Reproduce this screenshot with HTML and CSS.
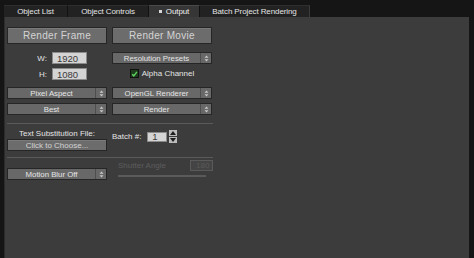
FILE: index.html
```html
<!DOCTYPE html>
<html>
<head>
<meta charset="utf-8">
<link rel="stylesheet" href="styles.css">
</head>
<body>
<div class="app">
  <div class="tabs">
    <div class="tab t-list">Object List</div>
    <div class="tab t-ctrl">Object Controls</div>
    <div class="tab t-out active"><span class="dot"></span>Output</div>
    <div class="tab t-batch">Batch Project Rendering</div>
  </div>
  <div class="panel">
    <div class="content">
      <div class="row r1">
        <div class="btn big">Render Frame</div>
        <div class="btn big">Render Movie</div>
      </div>
      <div class="row r2">
        <div class="col dims">
          <div class="field"><span class="lbl">W:</span><span class="input">1920</span></div>
          <div class="field"><span class="lbl">H:</span><span class="input">1080</span></div>
        </div>
        <div class="col">
          <div class="dd"><span class="dd-text">Resolution Presets</span><span class="dd-arrow"><svg width="5" height="7" viewBox="0 0 5 7"><path d="M2.5 0.5L4.5 2.8H0.5Z M2.5 6.5L4.5 4.2H0.5Z" fill="#c8c8c8"/></svg></span></div>
          <div class="check-row">
            <span class="checkbox"><svg width="8" height="8" viewBox="0 0 8 8"><path d="M1.4 4.2L3.2 6.1L6.8 1.6" fill="none" stroke="#5fd35f" stroke-width="1.6"/></svg></span>
            <span class="check-lbl">Alpha Channel</span>
          </div>
        </div>
      </div>
      <div class="row r3">
        <div class="dd"><span class="dd-text">Pixel Aspect</span><span class="dd-arrow"><svg width="5" height="7" viewBox="0 0 5 7"><path d="M2.5 0.5L4.5 2.8H0.5Z M2.5 6.5L4.5 4.2H0.5Z" fill="#c8c8c8"/></svg></span></div>
        <div class="dd"><span class="dd-text">OpenGL Renderer</span><span class="dd-arrow"><svg width="5" height="7" viewBox="0 0 5 7"><path d="M2.5 0.5L4.5 2.8H0.5Z M2.5 6.5L4.5 4.2H0.5Z" fill="#c8c8c8"/></svg></span></div>
      </div>
      <div class="row r4">
        <div class="dd"><span class="dd-text">Best</span><span class="dd-arrow"><svg width="5" height="7" viewBox="0 0 5 7"><path d="M2.5 0.5L4.5 2.8H0.5Z M2.5 6.5L4.5 4.2H0.5Z" fill="#c8c8c8"/></svg></span></div>
        <div class="dd"><span class="dd-text">Render</span><span class="dd-arrow"><svg width="5" height="7" viewBox="0 0 5 7"><path d="M2.5 0.5L4.5 2.8H0.5Z M2.5 6.5L4.5 4.2H0.5Z" fill="#c8c8c8"/></svg></span></div>
      </div>
      <div class="sep s1"></div>
      <div class="row r5">
        <div class="col">
          <div class="text-lbl">Text Substitution File:</div>
          <div class="btn small">Click to Choose...</div>
        </div>
        <div class="col batch">
          <span class="lbl batch-lbl">Batch #:</span>
          <span class="input batch-input">1</span>
          <span class="spinner">
            <span class="spin"><svg width="8" height="6" viewBox="0 0 8 6"><path d="M4 1L7 5H1Z" fill="#1e1e1e"/></svg></span>
            <span class="spin"><svg width="8" height="6" viewBox="0 0 8 6"><path d="M4 5L7 1H1Z" fill="#1e1e1e"/></svg></span>
          </span>
        </div>
      </div>
      <div class="sep s2"></div>
      <div class="row r6">
        <div class="col">
          <div class="dd blur"><span class="dd-text">Motion Blur Off</span><span class="dd-arrow"><svg width="5" height="7" viewBox="0 0 5 7"><path d="M2.5 0.5L4.5 2.8H0.5Z M2.5 6.5L4.5 4.2H0.5Z" fill="#c8c8c8"/></svg></span></div>
        </div>
        <div class="col shutter">
          <div class="shutter-row">
            <span class="shutter-lbl">Shutter Angle</span>
            <span class="shutter-input">180</span>
          </div>
          <div class="slider"></div>
        </div>
      </div>
    </div>
  </div>
</div>
</body>
</html>
```
FILE: styles.css
```css
* { box-sizing: border-box; }
html, body { margin: 0; padding: 0; }
body {
  background: #151515;
  width: 474px;
  height: 258px;
  overflow: hidden;
  font-family: "Liberation Sans", Arial, sans-serif;
  color: #e2e2e2;
}
.app { display: flex; flex-direction: column; height: 258px; padding-top: 5px; }
.tabs { display: flex; padding-left: 4px; height: 12px; }
.tab {
  height: 12px;
  background: #222;
  border-right: 1px solid #111;
  border-top: 1px solid #2e2e2e;
  font-size: 8px;
  font-weight: bold;
  color: #e4e4e4;
  display: flex;
  align-items: center;
  justify-content: center;
  letter-spacing: -0.1px;
}
.t-list { width: 64px; }
.t-ctrl { width: 81px; }
.t-out { width: 51px; }
.t-batch { width: 110px; border-right: 1px solid #3a3a3a; }
.tab.active { background: #363636; border-top: 1px solid #4a4a4a; color: #f0f0f0; font-weight: normal; }
.dot { width: 3px; height: 3px; background: #d8d8d8; margin-right: 4px; }
.t-out, .t-batch { font-weight: normal; }
.t-list, .t-ctrl { font-weight: normal; }
.panel {
  flex: 1;
  margin: 0 5px 0 4px;
  background: #3c3c3c;
  border-left: 1px solid #2c2c2c;
  padding: 10px 0 0 2px;
}
.content { width: 206px; display: flex; flex-direction: column; }
.row { display: flex; gap: 5px; }
.col { width: 100px; display: flex; flex-direction: column; }
.btn {
  width: 100px;
  background: #6c6c6c;
  border: 1px solid #262626;
  box-shadow: inset 0 1px 0 #7a7a7a;
  display: flex;
  align-items: center;
  justify-content: center;
  color: #d4d4d4;
}
.big { height: 17px; font-size: 10px; letter-spacing: 0.3px; }
.small { height: 12px; font-size: 8px; }
.r2 { margin-top: 8px; }
.dims { padding-left: 28px; gap: 4px; }
.field { display: flex; align-items: center; height: 12px; gap: 5px; }
.lbl { width: 12px; text-align: right; font-size: 8px; color: #e4e4e4; }
.input {
  background: #d4d4d4;
  border: 1px solid #8a8a8a;
  height: 12px;
  color: #3a3a3a;
  font-size: 9.5px;
  display: flex;
  align-items: center;
  padding-left: 4px;
}
.field .input { width: 35px; }
.dd {
  width: 100px;
  height: 12px;
  background: #686868;
  border: 1px solid #262626;
  display: flex;
  font-size: 7.8px;
  color: #e6e6e6;
}
.dd-text { flex: 1; display: flex; align-items: center; justify-content: center; }
.dd-arrow {
  width: 11px;
  border-left: 1px solid #4e4e4e;
  display: flex;
  align-items: center;
  justify-content: center;
}
.check-row { display: flex; align-items: center; justify-content: center; margin-top: 5px; gap: 3px; height: 9px; }
.checkbox {
  width: 9px; height: 9px;
  background: #1d3d1d;
  border: 1px solid #111;
  display: flex; align-items: center; justify-content: center;
}
.check-lbl { font-size: 8px; color: #e4e4e4; }
.r3 { margin-top: 7px; }
.r4 { margin-top: 4px; }
.sep { height: 1px; background: #5a5a5a; width: 206px; }
.s1 { margin-top: 8px; }
.r5 { margin-top: 4px; }
.text-lbl { font-size: 8px; height: 11px; display: flex; align-items: center; justify-content: center; color: #e4e4e4; }
.batch { flex-direction: row; align-items: center; height: 15px; margin-top: 1px; gap: 0; }
.batch-lbl { width: auto; text-align: left; margin-right: 6px; }
.batch-input { width: 20px; height: 10px; padding-left: 4px; }
.spinner { display: flex; flex-direction: column; margin-left: 2px; gap: 1px; }
.spin { width: 8px; height: 6px; background: #bcbcbc; display: flex; }
.s2 { margin-top: 6px; }
.r6 { margin-top: 2px; }
.blur { margin-top: 8px; }
.shutter { padding-left: 6px; }
.shutter-row { display: flex; align-items: center; justify-content: space-between; height: 11px; width: 95px; }
.shutter-lbl { font-size: 8px; color: #5c5c5c; }
.shutter-input {
  width: 23px; height: 11px;
  border: 1px solid #5a5a5a;
  background: #444;
  color: #5a5a5a;
  font-size: 8px;
  display: flex; align-items: center; padding-left: 5px;
}
.slider { width: 88px; height: 2px; background: #5a5a5a; margin-top: 4px; }
```
